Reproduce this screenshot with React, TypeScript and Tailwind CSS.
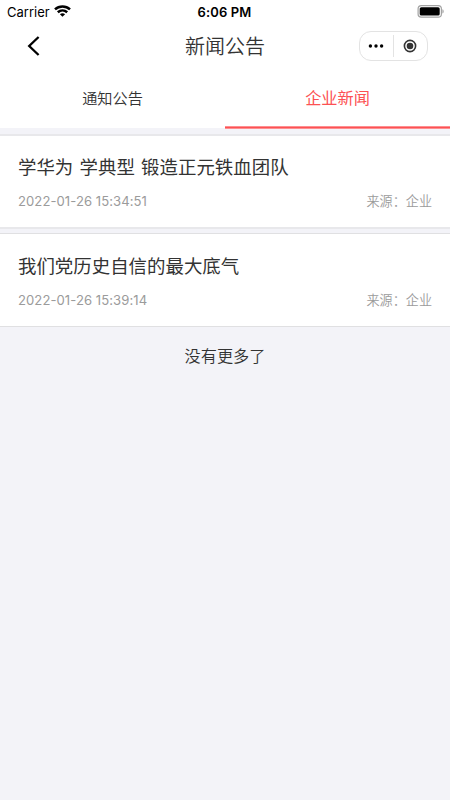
interface NewsItem {
  id: number;
  title: string;
  time: string;
  source: string;
}

const news: NewsItem[] = [
  { id: 1, title: '学华为 学典型 锻造正元铁血团队', time: '2022-01-26 15:34:51', source: '企业' },
  { id: 2, title: '我们党历史自信的最大底气', time: '2022-01-26 15:39:14', source: '企业' },
];

function StatusBar() {
  return (
    <div className="grid h-6 grid-cols-3 items-center pl-[7px] pr-[6px] font-['Inter',sans-serif] text-black">
      <div className="flex items-center gap-[4px]">
        <span className="text-[13px] leading-[23px]">Carrier</span>
        <svg className="mb-[2px]" width="17" height="12" viewBox="0 0 17 12" fill="none" stroke="#000" strokeWidth="2.5">
          <path d="M1 4.3C5.2 0.4 11.8 0.4 16 4.3" />
          <path d="M3.8 7.3C6.5 4.9 10.5 4.9 13.2 7.3" />
          <path d="M8.5 11.7L5.9 9.2C7.4 8 9.6 8 11.1 9.2Z" fill="#000" stroke="none" />
        </svg>
      </div>
      <span className="pr-[2px] text-center text-[13px] font-semibold leading-[23px] tracking-[0.15px]">6:06 PM</span>
      <svg className="mb-[2px] justify-self-end" width="27" height="13" viewBox="0 0 27 13">
        <rect x="1.1" y="0.6" width="23.3" height="11.6" rx="3.2" fill="none" stroke="#a3a3a3" strokeWidth="1.2" />
        <rect x="2.7" y="2.2" width="20" height="8.4" rx="1.6" fill="#000" />
        <path d="M25.4 4.3C27.1 5 27.1 7.8 25.4 8.5Z" fill="#a3a3a3" />
      </svg>
    </div>
  );
}

function NavBar() {
  return (
    <header className="grid h-11 grid-cols-3 items-center pl-[27px] pr-[22px]">
      <svg width="14" height="20" viewBox="0 0 14 20" fill="none" stroke="#000" strokeWidth="2.3">
        <path d="M11.6 1L2.2 10L11.6 19" />
      </svg>
      <h1 className="whitespace-nowrap pr-[5px] text-center text-[20px] font-[350] leading-[44px]">新闻公告</h1>
      <div className="flex h-[30px] w-[69px] items-center justify-self-end rounded-[12px] border border-[#e3e3e3]">
        <div className="flex flex-1 justify-center pr-[2px]">
          <svg width="16" height="4" viewBox="0 0 16 4">
            <circle cx="2.4" cy="2" r="1.7" />
            <circle cx="8" cy="2" r="1.7" />
            <circle cx="13.6" cy="2" r="1.7" />
          </svg>
        </div>
        <div className="h-[22px] w-px bg-[#e3e3e3]" />
        <div className="flex flex-1 justify-center pr-[2px]">
          <svg width="14" height="14" viewBox="0 0 14 14">
            <circle cx="7" cy="7" r="5.6" fill="none" stroke="#333" strokeWidth="1.6" />
            <circle cx="7" cy="7" r="3.3" fill="#333" />
          </svg>
        </div>
      </div>
    </header>
  );
}

function NewsCard({ item, first }: { item: NewsItem; first: boolean }) {
  return (
    <article
      className={`flex flex-col bg-white px-[18px] ${
        first ? 'h-[95px] border-y-2 border-[#e8e8eb] pt-[16px]' : 'h-[94px] border-y border-[#e0e0e2] pt-[17px]'
      }`}
    >
      <h2 className="whitespace-nowrap text-[18.45px] leading-[29px] [word-spacing:2.1px]">{item.title}</h2>
      <div className="mt-[9px] flex justify-between text-[13.1px] leading-[22px] text-[#9b9b9b]">
        <time className="font-['Inter',sans-serif] tracking-[0.06px]">{item.time}</time>
        <span className="font-[350]">来源：{item.source}</span>
      </div>
    </article>
  );
}

export default function App() {
  return (
    <div className="min-h-screen bg-[#f3f3f8] font-['Noto_Sans_CJK_SC',sans-serif] text-[#333]">
      <div className="bg-white">
        <StatusBar />
        <NavBar />
        <nav className="grid h-[60px] grid-cols-2 text-center">
          <button className="pb-[2px] text-[15.2px] font-[350]">通知公告</button>
          <button className="relative pb-[2px] text-[16.2px] text-[#fc5153]">
            企业新闻
            <span className="absolute inset-x-0 -bottom-px h-[3px] border-y border-[#fe8e90] bg-[#fc5153]" />
          </button>
        </nav>
      </div>
      <main className="flex flex-col gap-[4px] pt-[6px]">
        {news.map((item, i) => (
          <NewsCard key={item.id} item={item} first={i === 0} />
        ))}
      </main>
      <p className="pt-[13px] text-center text-[16.2px] font-[350] leading-[30px]">没有更多了</p>
    </div>
  );
}
